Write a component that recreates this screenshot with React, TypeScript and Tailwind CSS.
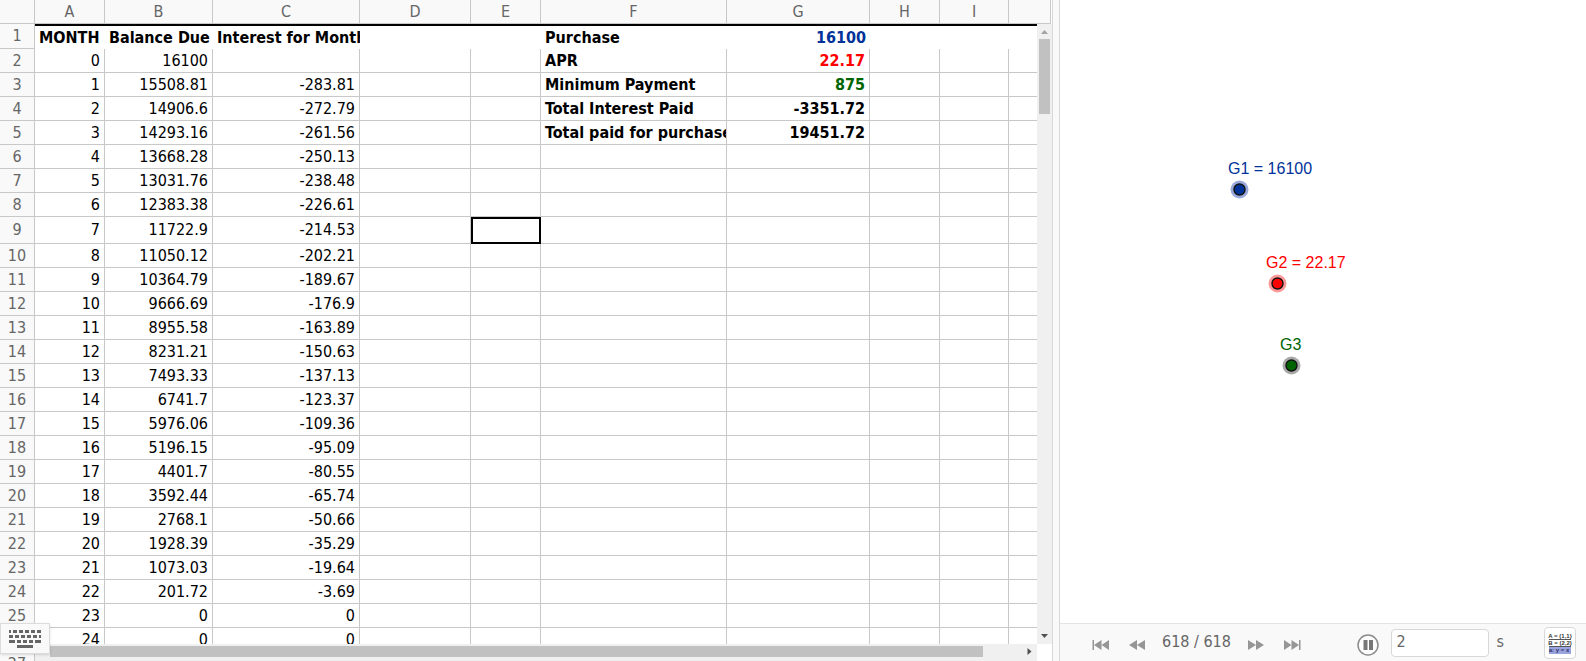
import type { ReactNode } from 'react'

interface Row {
  month: string
  balance: string
  interest: string
}

interface Summary {
  label: string
  value: string
  color: string
}

interface Point {
  label: string
  position: string
  text: string
  halo: string
  dot: string
}

const columns = ['A', 'B', 'C', 'D', 'E', 'F', 'G', 'H', 'I', '']

const rows: Row[] = [
  { month: '0', balance: '16100', interest: '' },
  { month: '1', balance: '15508.81', interest: '-283.81' },
  { month: '2', balance: '14906.6', interest: '-272.79' },
  { month: '3', balance: '14293.16', interest: '-261.56' },
  { month: '4', balance: '13668.28', interest: '-250.13' },
  { month: '5', balance: '13031.76', interest: '-238.48' },
  { month: '6', balance: '12383.38', interest: '-226.61' },
  { month: '7', balance: '11722.9', interest: '-214.53' },
  { month: '8', balance: '11050.12', interest: '-202.21' },
  { month: '9', balance: '10364.79', interest: '-189.67' },
  { month: '10', balance: '9666.69', interest: '-176.9' },
  { month: '11', balance: '8955.58', interest: '-163.89' },
  { month: '12', balance: '8231.21', interest: '-150.63' },
  { month: '13', balance: '7493.33', interest: '-137.13' },
  { month: '14', balance: '6741.7', interest: '-123.37' },
  { month: '15', balance: '5976.06', interest: '-109.36' },
  { month: '16', balance: '5196.15', interest: '-95.09' },
  { month: '17', balance: '4401.7', interest: '-80.55' },
  { month: '18', balance: '3592.44', interest: '-65.74' },
  { month: '19', balance: '2768.1', interest: '-50.66' },
  { month: '20', balance: '1928.39', interest: '-35.29' },
  { month: '21', balance: '1073.03', interest: '-19.64' },
  { month: '22', balance: '201.72', interest: '-3.69' },
  { month: '23', balance: '0', interest: '0' },
  { month: '24', balance: '0', interest: '0' },
  { month: '25', balance: '0', interest: '0' },
]

// Keyed by spreadsheet row number
const summary: Record<number, Summary> = {
  2: { label: 'APR', value: '22.17', color: 'text-[#ff0000]' },
  3: { label: 'Minimum Payment', value: '875', color: 'text-[#006400]' },
  4: { label: 'Total Interest Paid', value: '-3351.72', color: 'text-black' },
  5: { label: 'Total paid for purchase', value: '19451.72', color: 'text-black' },
}

const points: Point[] = [
  {
    label: 'G1 = 16100',
    position: 'left-[168px] top-[159px]',
    text: 'text-[#003399]',
    halo: 'fill-[#99a9db]',
    dot: 'fill-[#003399]',
  },
  {
    label: 'G2 = 22.17',
    position: 'left-[206px] top-[253px]',
    text: 'text-[#ff0000]',
    halo: 'fill-[#ff9999]',
    dot: 'fill-[#ff0000]',
  },
  {
    label: 'G3',
    position: 'left-[220px] top-[335px]',
    text: 'text-[#006400]',
    halo: 'fill-[#a8a8a8]',
    dot: 'fill-[#006400]',
  },
]

const headCell = 'border-r border-b border-[#c8c8c8] bg-[#f9f9f9] p-0 text-center font-normal text-[#666666]'

function Cell({ children, className = '' }: { children?: ReactNode; className?: string }) {
  return (
    <td
      className={`overflow-hidden border-r border-b border-[#c8c8c8] px-1 py-0 text-right whitespace-nowrap ${className}`}
    >
      {children}
    </td>
  )
}

function TitleCell({ children, className = '' }: { children?: ReactNode; className?: string }) {
  return (
    <td
      className={`overflow-hidden border-t-2 border-black px-1 py-0 font-bold whitespace-nowrap ${className}`}
    >
      {children}
    </td>
  )
}

function Sheet() {
  return (
    <table className="w-full table-fixed border-separate border-spacing-0 leading-5">
      <colgroup>
        <col className="w-[35px]" />
        <col className="w-[70px]" />
        <col className="w-[108px]" />
        <col className="w-[147px]" />
        <col className="w-[111px]" />
        <col className="w-[70px]" />
        <col className="w-[186px]" />
        <col className="w-[143px]" />
        <col className="w-[70px]" />
        <col className="w-[69px]" />
        <col />
      </colgroup>
      <thead>
        <tr className="h-6">
          <td className={headCell} />
          {columns.map((name) => (
            <th key={name} scope="col" className={headCell}>
              {name}
            </th>
          ))}
        </tr>
      </thead>
      <tbody>
        <tr className="h-[25px]">
          <th scope="row" className={headCell}>
            1
          </th>
          <TitleCell>MONTH</TitleCell>
          <TitleCell>Balance Due</TitleCell>
          <TitleCell>Interest for Month</TitleCell>
          <TitleCell />
          <TitleCell />
          <TitleCell>Purchase</TitleCell>
          <TitleCell className="text-right text-[#003399]">16100</TitleCell>
          <TitleCell />
          <TitleCell />
          <TitleCell />
        </tr>
        {rows.map((row, i) => {
          const number = i + 2
          const extra = summary[number]
          const selected = number === 9
          return (
            <tr key={number} className={selected ? 'h-[27px]' : 'h-6'}>
              <th scope="row" className={headCell}>
                {number}
              </th>
              <Cell>{row.month}</Cell>
              <Cell>{row.balance}</Cell>
              <Cell>{row.interest}</Cell>
              <Cell />
              <Cell className={selected ? 'outline-2 -outline-offset-2 outline-black' : ''} />
              <td className="overflow-hidden border-r border-b border-[#c8c8c8] px-1 py-0 text-left font-bold whitespace-nowrap">
                {extra?.label}
              </td>
              <Cell className={`font-bold ${extra?.color ?? ''}`}>{extra?.value}</Cell>
              <Cell />
              <Cell />
              <Cell />
            </tr>
          )
        })}
      </tbody>
    </table>
  )
}

function VerticalScrollbar() {
  return (
    <div className="absolute top-6 right-0 bottom-[17px] flex w-[15px] flex-col items-center bg-[#f0f0f0]">
      <svg className="h-[15px] w-[15px] shrink-0 fill-[#a3a3a3]" viewBox="0 0 15 15" aria-hidden="true">
        <path d="M4 10 L7.5 6 L11 10 Z" />
      </svg>
      <div className="h-[75px] w-[11px] bg-[#c1c1c1]" />
      <svg className="mt-auto h-[15px] w-[15px] shrink-0 fill-[#505050]" viewBox="0 0 15 15" aria-hidden="true">
        <path d="M4 5 L11 5 L7.5 9 Z" />
      </svg>
    </div>
  )
}

function HorizontalScrollbar() {
  return (
    <div className="absolute right-0 bottom-0 left-[35px] flex h-[17px] bg-white">
      <div className="flex flex-1 items-center bg-[#f0f0f0] pb-[2px] pl-[15px]">
        <div className="h-[11px] flex-1 bg-[#c1c1c1]" />
        <svg className="ml-[39px] h-[15px] w-[15px] shrink-0 fill-[#505050]" viewBox="0 0 15 15" aria-hidden="true">
          <path d="M5.5 4 L9.5 7.5 L5.5 11 Z" />
        </svg>
      </div>
      <div className="w-[15px]" />
    </div>
  )
}

function KeyboardButton() {
  return (
    <button
      type="button"
      aria-label="Keyboard"
      className="absolute bottom-[7px] left-0 flex h-[31px] w-[50px] items-center justify-center border border-[#dcdcdc] bg-[#f9f9f9] shadow-sm"
    >
      <svg className="h-[18px] w-8 fill-[#666666]" viewBox="0 0 32 18" aria-hidden="true">
        <path d="M0 0h2v3h-2z M4 0h4v3h-4z M10 0h4v3h-4z M16 0h4v3h-4z M22 0h4v3h-4z M28 0h4v3h-4z" />
        <path d="M0 5h4v3h-4z M6 5h4v3h-4z M12 5h4v3h-4z M18 5h4v3h-4z M24 5h4v3h-4z M30 5h2v3h-2z" />
        <path d="M0 10h6v3h-6z M8 10h4v3h-4z M14 10h4v3h-4z M20 10h4v3h-4z M26 10h6v3h-6z" />
        <path d="M8 15h16v3h-16z" />
      </svg>
    </button>
  )
}

function StepButton({ label, children }: { label: string; children: ReactNode }) {
  return (
    <button type="button" aria-label={label} className="mt-1 shrink-0">
      <svg className="h-[10px] w-[17px] fill-[#969696]" viewBox="0 0 17 10" aria-hidden="true">
        {children}
      </svg>
    </button>
  )
}

function NavigationBar() {
  return (
    <div className="flex h-[38px] items-center border-t border-[#e3e3e3] bg-[#f9f9f9] pr-[10px] pl-8 text-[#666666]">
      <StepButton label="First step">
        <path d="M0.5 0h1.5v10h-1.5z M9.5 0v10l-7.5 -5z M17 0v10l-7.5 -5z" />
      </StepButton>
      <div className="w-5" />
      <StepButton label="Previous step">
        <path d="M8 0v10l-8 -5z M16 0v10l-8 -5z" />
      </StepButton>
      <span className="mx-4 pb-px whitespace-nowrap">618 / 618</span>
      <StepButton label="Next step">
        <path d="M1 0v10l8 -5z M9 0v10l8 -5z" />
      </StepButton>
      <div className="w-5" />
      <StepButton label="Last step">
        <path d="M0 0v10l7.5 -5z M7.5 0v10l7.5 -5z M15 0h1.5v10h-1.5z" />
      </StepButton>
      <button type="button" aria-label="Pause" className="mt-1 ml-auto shrink-0">
        <svg className="h-[22px] w-[22px]" viewBox="0 0 22 22" aria-hidden="true">
          <circle cx="11" cy="11" r="10" fill="#fdfdfd" stroke="#8c8c8c" strokeWidth="1.5" />
          <path d="M6.5 6h4v10h-4z M12 6h4v10h-4z" fill="#777777" />
        </svg>
      </button>
      <input
        type="text"
        id="speed"
        defaultValue="2"
        className="ml-3 h-7 w-[98px] rounded border border-[#d8d8d8] bg-white px-[5px] pb-[3px] text-base outline-none"
      />
      <label htmlFor="speed" className="ml-2 pb-px">
        s
      </label>
      <button
        type="button"
        aria-label="Construction protocol"
        className="ml-10 h-8 w-8 shrink-0 rounded border border-[#d8d8d8] bg-white"
      >
        <svg
          className="h-[30px] w-[30px] font-['Liberation_Sans'] text-[6px] font-bold"
          viewBox="0 0 30 30"
          aria-hidden="true"
        >
          <path d="M4 11.5h22" stroke="#555555" />
          <path d="M4 19h22v7h-22z" fill="#99a3dd" />
          <path d="M4 18.5h22" stroke="#555555" />
          <text x="15" y="10" textAnchor="middle" fill="#333333">
            A = (1,1)
          </text>
          <text x="15" y="17" textAnchor="middle" fill="#333333">
            B = (2,2)
          </text>
          <text x="14" y="24" textAnchor="middle" fill="#333366">
            a: y = x
          </text>
        </svg>
      </button>
    </div>
  )
}

function App() {
  return (
    <div className="flex h-screen overflow-hidden bg-white font-['DejaVu_Sans_Condensed','DejaVu_Sans',sans-serif] text-base text-black">
      <section className="relative min-w-0 flex-1 overflow-hidden pr-px">
        <Sheet />
        <VerticalScrollbar />
        <HorizontalScrollbar />
        <KeyboardButton />
      </section>
      <div className="w-2 shrink-0 border-x border-[#d8d8d8] bg-[#f9f9f9]" />
      <section className="flex w-[526px] shrink-0 flex-col">
        <div className="relative flex-1 font-['Liberation_Sans',Arial,sans-serif] leading-5">
          {points.map((point) => (
            <div key={point.label} className={`absolute whitespace-nowrap ${point.position}`}>
              <p className={point.text}>{point.label}</p>
              <svg className="mt-px ml-[2px] h-[19px] w-[19px]" viewBox="0 0 19 19" aria-hidden="true">
                <circle cx="9.5" cy="9.5" r="9" className={point.halo} />
                <circle cx="9.5" cy="9.5" r="5.5" stroke="#111111" strokeWidth="1.4" className={point.dot} />
              </svg>
            </div>
          ))}
        </div>
        <NavigationBar />
      </section>
    </div>
  )
}

export default App
